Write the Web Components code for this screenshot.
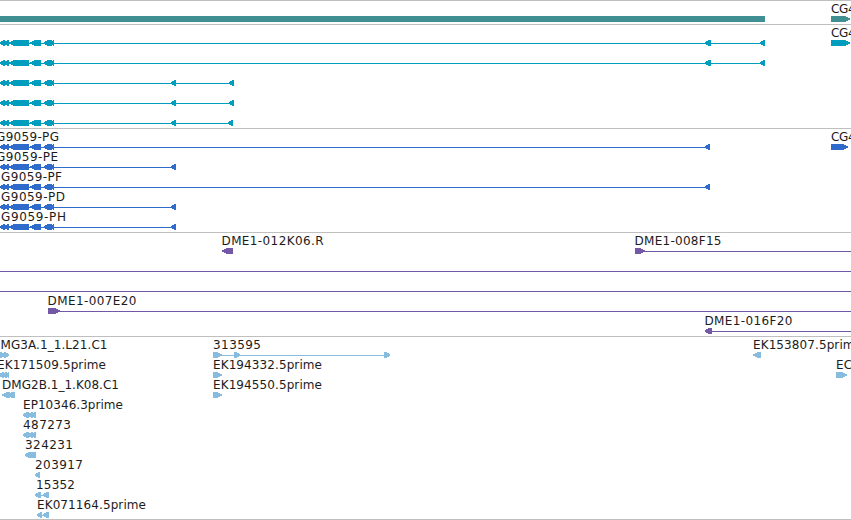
<!DOCTYPE html>
<html lang="en">
<head>
<meta charset="utf-8">
<title>Genome browser</title>
<style>
  body {
    margin: 0;
    overflow: hidden;
    background: #fff;
    font-family: 'DejaVu Sans', sans-serif;
  }
</style>
</head>
<body>

<genome-view></genome-view>

<script>
// One line of features. Glyphs are written as "<start,end" or ">start,end",
// a plain bar as "=start,end"; the "line" attribute is the intron line.
class FeatureRow extends HTMLElement {
  connectedCallback() {
    const shadowRoot = this.attachShadow({ mode: 'open' });
    shadowRoot.innerHTML = `
      <style>
        :host { display: block; height: 20px; }
        svg { display: block; width: 100%; height: 20px; overflow: visible; }
        .glyph { fill: var(--track-color); shape-rendering: crispEdges; }
        text { font-size: 12px; fill: #1c1c1c; }
      </style>
      <svg>${this.lines()}${this.glyphs()}${this.labels()}</svg>
    `;
  }

  list(name) {
    const value = this.getAttribute(name);
    return value ? value.split(' ') : [];
  }

  lines() {
    return this.list('line').map(item => {
      const [start, end] = item.split(',').map(Number);
      return `<rect class="glyph" x="${start}" y="18" width="${end - start}" height="1"/>`;
    }).join('');
  }

  glyphs() {
    return this.list('glyphs').map(item => {
      const kind = item[0];
      const [a, b] = item.slice(1).split(',').map(Number);
      if (kind === '=') {
        return `<rect class="glyph" x="${a}" y="15" width="${b - a}" height="6"/>`;
      }
      // the head tapers in pixel steps: 2px tall at the tip, 4px, then full height
      const back = kind === '<' ? b : a;
      const tip = kind === '<' ? a : b;
      const d = kind === '<' ? 1 : -1;
      const long = b - a > 7;
      const s1 = tip + d * (long ? 2 : 1);
      const s2 = tip + d * (long ? 4 : 3);
      return `<path class="glyph" d="M${tip} 17H${s1}V16H${s2}V15H${back}V21H${s2}V20H${s1}V19H${tip}Z"/>`;
    }).join('');
  }

  labels() {
    return this.list('labels').map(item => {
      const [x, width, name] = item.split(',');
      return `<text x="${x}" y="12" textLength="${width}">${name}</text>`;
    }).join('');
  }
}
customElements.define('feature-row', FeatureRow);

class GenomeTrack extends HTMLElement {
  constructor() {
    super();
    this.attachShadow({ mode: 'open' }).innerHTML = `
      <style>
        :host {
          display: flex;
          flex-direction: column;
          border-top: 1px solid #bfbfbf;
          padding-bottom: 3px;
        }
        :host([last]) {
          padding-bottom: 2px;
          border-bottom: 1px solid #bfbfbf;
        }
      </style>
      <slot></slot>
    `;
  }
}
customElements.define('genome-track', GenomeTrack);

// exons shared by all the transcripts at the left
const exons = '<0,5 <4,9 <9,29 <30,41 <44,50 <47,52 <50,54';

const tracks = [
  { color: '#3f8f93', rows: [
    { glyphs: '=0,765 >831,850', labels: '831,32,CG42' },
  ] },
  { color: '#009dbf', rows: [
    { line: '0,765', glyphs: exons + ' <705,711 <760,765 >831,850', labels: '831,32,CG42' },
    { line: '0,765', glyphs: exons + ' <705,711 <760,765' },
    { line: '0,234', glyphs: exons + ' <171,176 <229,234' },
    { line: '0,234', glyphs: exons + ' <171,176 <229,234' },
    { line: '0,233', glyphs: exons + ' <171,176 <228,233' },
  ] },
  { color: '#2f6bcb', rows: [
    { line: '0,710', glyphs: exons + ' <705,710 >831,848', labels: '-4,63,G9059-PG 831,32,CG42' },
    { line: '0,176', glyphs: exons + ' <171,176', labels: '-4,62,G9059-PE' },
    { line: '0,710', glyphs: exons + ' <705,710', labels: '1,61,G9059-PF' },
    { line: '0,176', glyphs: exons + ' <171,176', labels: '1,64,G9059-PD' },
    { line: '0,176', glyphs: exons + ' <171,176', labels: '1,65,G9059-PH' },
  ] },
  { color: '#7358a8', rows: [
    { line: '635,851', glyphs: '<222,233 >635,645', labels: '221.5,102,DME1-012K06.R 634.5,87,DME1-008F15' },
    { line: '0,851' },
    { line: '0,851' },
    { line: '48,851', glyphs: '>48,60', labels: '47.5,89,DME1-007E20' },
    { line: '705,851', glyphs: '<705,712', labels: '704.5,88,DME1-016F20' },
  ] },
  { color: '#88bcdf', rows: [
    { line: '213,389', glyphs: '>0,5 >4,9 >213,222 >234,240 >384,390 <753,761',
      labels: '0.5,107,MG3A.1_1.L21.C1 213,48,313595 753,109,EK153807.5prime' },
    { glyphs: '<-1,4 <2,7 <5,9 >213,222 >836,847', labels: '-3,109,EK171509.5prime 213,109,EK194332.5prime 836,32,EC24' },
    { glyphs: '<2,10 <8,15 >213,222', labels: '2,117,DMG2B.1_1.K08.C1 213,109,EK194550.5prime' },
    { glyphs: '<23,29 <28,33 <31,36', labels: '23,100,EP10346.3prime' },
    { glyphs: '<23,29 <28,33 <31,36', labels: '23,48,487273' },
    { glyphs: '<25,31 <28,34 <31,36', labels: '25,48,324231' },
    { glyphs: '<35,40', labels: '35,48,203917' },
    { line: '37,47', glyphs: '<35,41 <43,49', labels: '36,39,15352' },
    { line: '39,47', glyphs: '<37,42 <43,49', labels: '37,109,EK071164.5prime' },
  ] },
];

class GenomeView extends HTMLElement {
  constructor() {
    super();
    const shadowRoot = this.attachShadow({ mode: 'open' });
    shadowRoot.innerHTML = `
      <style>
        :host {
          display: flex;
          flex-direction: column;
          width: 851px;
          height: 520px;
          overflow: hidden;
        }
      </style>
      ${tracks.map((track, i) => `
        <genome-track style="--track-color: ${track.color}" ${i === tracks.length - 1 ? 'last' : ''}>
          ${track.rows.map(row => `
            <feature-row line="${row.line || ''}" glyphs="${row.glyphs || ''}" labels="${row.labels || ''}"></feature-row>
          `).join('')}
        </genome-track>
      `).join('')}
    `;
  }
}
customElements.define('genome-view', GenomeView);
</script>
</body>
</html>
